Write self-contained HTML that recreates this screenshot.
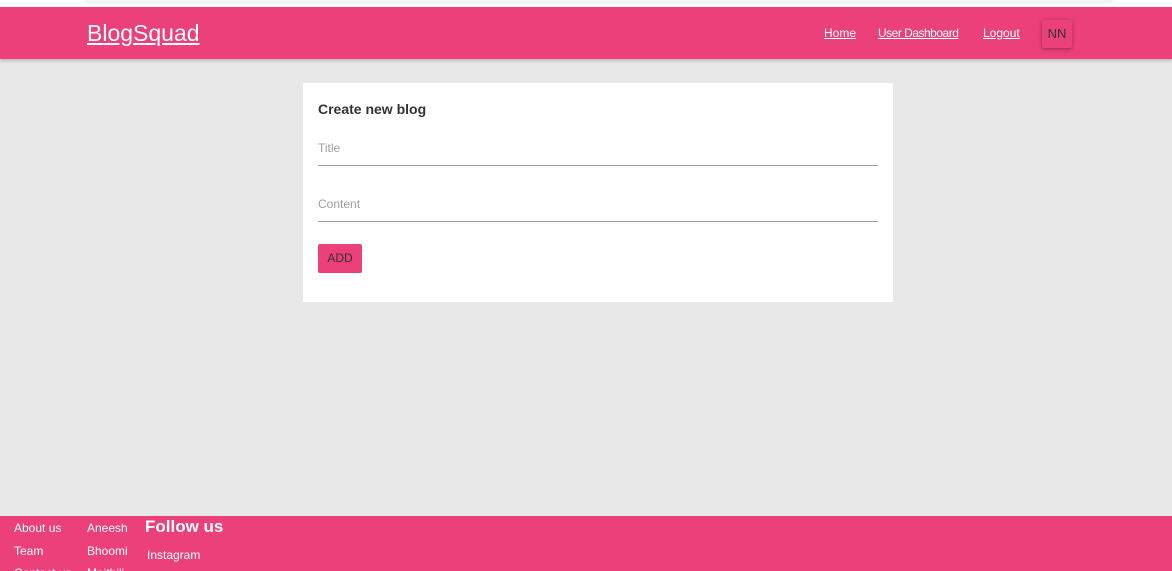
<!DOCTYPE html>
<html><head><style>
body{margin:0;width:1172px;height:571px;overflow:hidden;background:#e8e8e8;font-family:"Liberation Sans",sans-serif;position:relative}
.top{position:absolute;left:0;top:0;width:1172px;height:7px;background:#fff}
.top div{position:absolute;left:85px;top:0;width:1028px;height:4px;background:#f1f3f4;border-radius:0 0 6px 6px}
nav{position:absolute;top:7px;left:0;width:1172px;height:52px;background:#ec407a;box-shadow:0 2px 3px rgba(0,0,0,.2)}
.brand{position:absolute;left:87px;top:13px;color:#fff;font-size:23px;text-decoration:underline}
.links a{position:absolute;top:19px;color:#fff;font-size:12px;text-decoration:underline;white-space:nowrap}
.nn{position:absolute;left:1042px;top:13px;width:30px;height:28px;background:#ec407a;box-shadow:0 1px 4px rgba(0,0,0,.35);border-radius:2px;color:#333;font-size:13px;text-align:center;line-height:28px}
.card{position:absolute;left:303px;top:83px;width:590px;height:219px;background:#fff}
h3{position:absolute;left:15px;top:18px;margin:0;font-size:14px;color:#333;font-weight:bold}
.f{position:absolute;left:15px;width:560px;border-bottom:1px solid #9e9e9e;color:#9e9e9e;font-size:12px;height:24px}
.btn{position:absolute;left:15px;top:161px;width:44px;height:29px;background:#ec407a;color:#333;font-size:12px;text-align:center;line-height:29px;border-radius:2px}
footer{position:absolute;left:0;top:516px;width:1172px;height:55px;background:#ec407a;color:#fff;font-size:12px;overflow:hidden}
footer span{position:absolute;white-space:nowrap}
</style></head><body>
<div class="top"><div></div></div>
<nav><a class="brand">BlogSquad</a>
<div class="links"><a style="left:824px">Home</a><a style="left:878px;letter-spacing:-0.5px">User Dashboard</a><a style="left:983px">Logout</a></div>
<div class="nn">NN</div></nav>
<div class="card"><h3>Create new blog</h3>
<div class="f" style="top:58px">Title</div>
<div class="f" style="top:114px">Content</div>
<div class="btn">ADD</div></div>
<footer>
<span style="left:14px;top:5px">About us</span><span style="left:87px;top:5px">Aneesh</span>
<span style="left:145px;top:1px;font-size:17px;font-weight:bold">Follow us</span>
<span style="left:14px;top:28px">Team</span><span style="left:87px;top:28px">Bhoomi</span>
<span style="left:147px;top:32px">Instagram</span>
<span style="left:14px;top:50px">Contact us</span><span style="left:87px;top:50px">Maithili</span>
</footer>
</body></html>
